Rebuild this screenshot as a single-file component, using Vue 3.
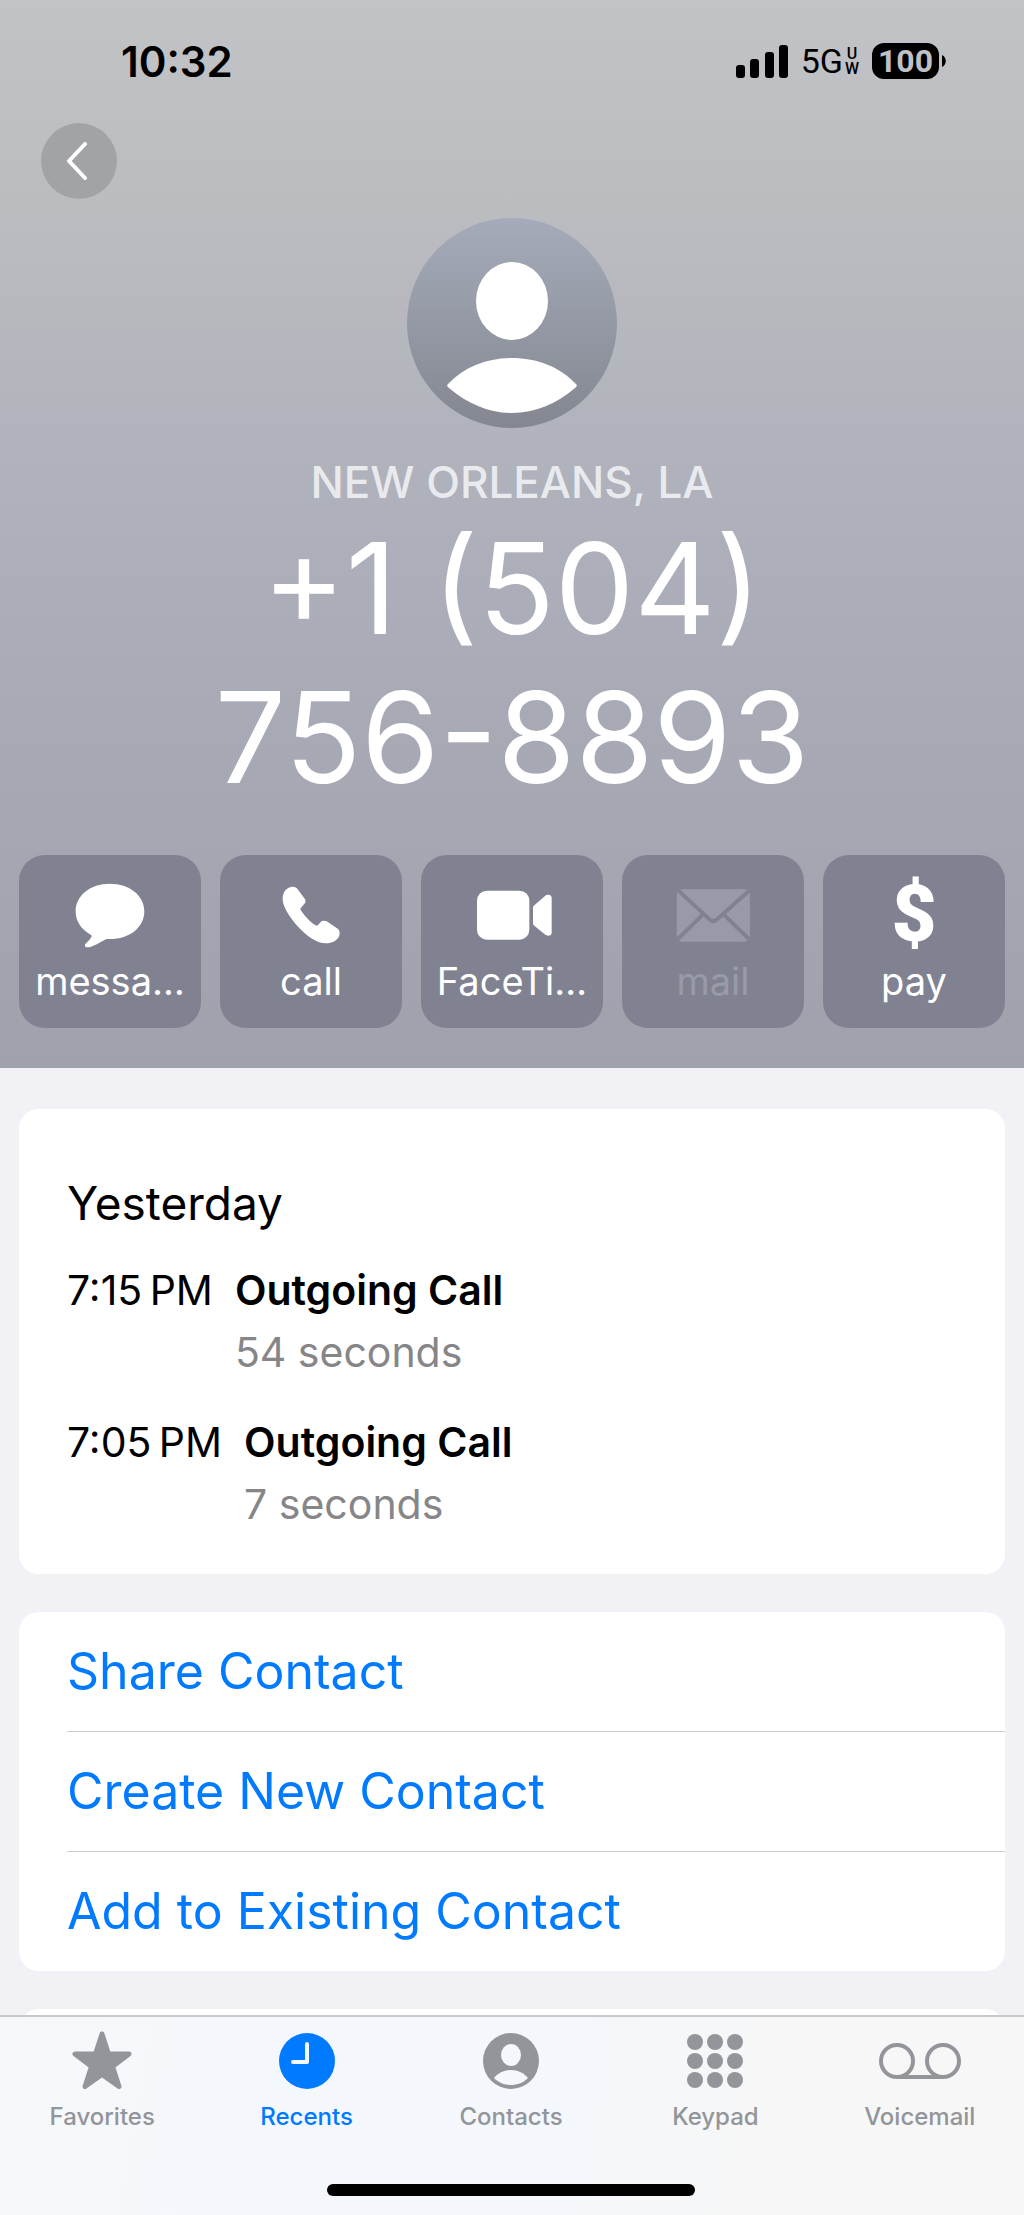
<script setup>
import { ref } from 'vue';

const actions = [
  { id: 'message', label: 'messa…' },
  { id: 'call', label: 'call' },
  { id: 'video', label: 'FaceTi…' },
  { id: 'mail', label: 'mail', disabled: true },
  { id: 'pay', label: 'pay' }
];

const calls = [
  { time: '7:15\u202fPM', type: 'Outgoing Call', duration: '54 seconds' },
  { time: '7:05\u202fPM', type: 'Outgoing Call', duration: '7 seconds' }
];

const options = ['Share Contact', 'Create New Contact', 'Add to Existing Contact'];

const tabs = ['Favorites', 'Recents', 'Contacts', 'Keypad', 'Voicemail'];
const activeTab = ref('Recents');
</script>

<template>
  <div class="phone">
    <header class="hero">
      <div class="status">
        <span class="clock">10:32</span>
        <div class="indicators">
          <svg class="signal" viewBox="0 0 52 33" width="52" height="33">
            <rect x="0" y="20" width="9" height="13" rx="3" />
            <rect x="14" y="14" width="9" height="19" rx="3" />
            <rect x="29" y="7" width="9" height="26" rx="3" />
            <rect x="43" y="0" width="9" height="33" rx="3" />
          </svg>
          <div class="network">
            <span>5G</span>
            <span class="network-sub"><span>U</span><span>W</span></span>
          </div>
          <div class="battery">
            <span class="battery-level">100</span>
            <svg viewBox="0 0 4 12" width="4" height="12"><path d="M0 0C5 2 5 10 0 12Z" /></svg>
          </div>
        </div>
      </div>

      <button class="back" type="button" aria-label="Back">
        <svg viewBox="0 0 22 38" width="22" height="38">
          <path d="M19 2 3 19 19 36" fill="none" stroke="currentColor" stroke-width="4" stroke-linecap="round" stroke-linejoin="round" />
        </svg>
      </button>

      <div class="contact">
        <svg class="avatar" viewBox="0 0 210 210" width="210" height="210">
          <defs>
            <linearGradient id="avatar-fill" x1="0" y1="0" x2="0" y2="1">
              <stop offset="0" stop-color="#a5abba" />
              <stop offset="1" stop-color="#848790" />
            </linearGradient>
          </defs>
          <circle cx="105" cy="105" r="105" fill="url(#avatar-fill)" />
          <ellipse cx="105" cy="83" rx="36" ry="39" fill="#fff" />
          <path d="M41 166C57 149 80 140 105 140S153 149 169 166Q171 168 168 170C149 186 128 195 105 195S61 186 42 170Q39 168 41 166Z" fill="#fff" />
        </svg>
        <p class="location">NEW ORLEANS, LA</p>
        <h1 class="number"><span>+1 (504)</span> <span>756-8893</span></h1>
      </div>

      <div class="actions">
        <button v-for="action in actions" :key="action.id" class="action" type="button" :disabled="action.disabled">
          <span class="action-icon">
            <svg v-if="action.id === 'message'" viewBox="223 154 211 196" width="70" height="65">
              <path d="M328 156C388 156 432 192 432 239C432 287 388 323 328 323C324 323 319 322 315 324C300 331 282 345 262 348C254 349 250 342 255 337C262 330 270 322 273 315C274 312 272 311 269 309C240 292 225 268 225 239C225 192 269 156 328 156Z" />
            </svg>
            <svg v-else-if="action.id === 'call'" viewBox="844 168 174 174" width="58" height="58">
              <path d="M876 170C882 170 887 172 890 176L911 205C916 212 916 216 911 222L901 233C899 235 899 237 900 239C908 254 928 275 945 286C948 288 950 287 952 285L960 276C965 271 972 271 978 274L1009 295C1014 298 1017 303 1017 309C1017 327 998 340 976 340C950 340 918 320 884 281C858 249 846 226 846 205C846 185 860 170 876 170Z" />
            </svg>
            <svg v-else-if="action.id === 'video'" viewBox="-84 178 240 150" width="80" height="50">
              <rect x="-69" y="180" width="157" height="147" rx="30" />
              <path d="M104 223 134 197C143 189 155 192 155 202V306C155 316 143 318 134 311L103 285C100 282 99 281 99 277V232C99 228 100 226 104 223Z" />
            </svg>
            <svg v-else-if="action.id === 'mail'" viewBox="526 174 224 160" width="75" height="53">
              <rect x="527" y="175" width="221" height="158" rx="16" />
              <g class="mail-fold">
                <path d="M527 174 625 265Q637 277 649 265L748 177" />
                <path d="M605 252 524 331" />
                <path d="M670 252 751 331" />
              </g>
            </svg>
            <span v-else class="dollar">$</span>
          </span>
          <span class="action-label">{{ action.label }}</span>
        </button>
      </div>
    </header>

    <main class="content">
      <section class="card history">
        <h2>Yesterday</h2>
        <div v-for="call in calls" :key="call.time" class="call">
          <span class="call-time">{{ call.time }}</span>
          <div>
            <div class="call-type">{{ call.type }}</div>
            <div class="call-duration">{{ call.duration }}</div>
          </div>
        </div>
      </section>

      <section class="card options">
        <button v-for="option in options" :key="option" class="option" type="button">{{ option }}</button>
      </section>

      <section class="card next"></section>
    </main>

    <footer class="tabbar">
      <nav class="tabs">
        <button
          v-for="tab in tabs"
          :key="tab"
          class="tab"
          :class="{ active: activeTab === tab }"
          type="button"
          @click="activeTab = tab"
        >
          <span class="tab-icon">
            <svg v-if="tab === 'Favorites'" viewBox="0 0 62 60" width="62" height="60">
              <path d="M31 3 37.500 23H58L41.500 35.500 48 55.500 31 43.500 14 55.500 20.500 35.500 4 23H24.500Z" stroke="currentColor" stroke-width="5" stroke-linejoin="round" />
            </svg>
            <svg v-else-if="tab === 'Recents'" viewBox="0 0 56 56" width="56" height="56">
              <circle cx="28" cy="28" r="28" />
              <path d="M28 11V29H14" fill="none" stroke="#f4f7fc" stroke-width="4" stroke-linecap="round" stroke-linejoin="round" />
            </svg>
            <svg v-else-if="tab === 'Contacts'" viewBox="0 0 56 56" width="56" height="56">
              <circle cx="28" cy="28" r="28" />
              <ellipse cx="28" cy="22" rx="10" ry="11" fill="#f4f7fc" />
              <path d="M11 45C15 40 21 37 28 37S41 40 45 45C40 50 34 52 28 52S16 50 11 45Z" fill="#f4f7fc" />
            </svg>
            <svg v-else-if="tab === 'Keypad'" viewBox="0 0 56 54" width="56" height="54">
              <template v-for="row in 3" :key="row">
                <circle v-for="col in 3" :key="col" :cx="col * 20 - 12" :cy="row * 19 - 11" r="8" />
              </template>
            </svg>
            <svg v-else viewBox="0 0 82 36" width="82" height="36">
              <g fill="none" stroke="currentColor" stroke-width="4">
                <circle cx="18" cy="18" r="16" />
                <circle cx="64" cy="18" r="16" />
                <path d="M18 34H64" />
              </g>
            </svg>
          </span>
          <span>{{ tab }}</span>
        </button>
      </nav>
      <div class="home-indicator"></div>
    </footer>
  </div>
</template>

<style>
body {
  margin: 0;
  background: #f2f1f6;
}
</style>

<style scoped>
.phone {
  height: 100vh;
  display: flex;
  flex-direction: column;
  overflow: hidden;
  background: #f2f1f6;
  color: #000;
  font-family: Inter, "Liberation Sans", sans-serif;
}

button {
  margin: 0;
  padding: 0;
  border: 0;
  background: none;
  color: inherit;
  font: inherit;
  cursor: pointer;
}

svg {
  display: block;
  flex: none;
  fill: currentColor;
}

h1, h2, p {
  margin: 0;
  font-weight: 400;
}

.hero {
  flex: none;
  padding: 36px 19px 40px;
  background: linear-gradient(#c2c3c6 0%, #bbbcc0 20%, #b0b3bc 42%, #a8aab6 65%, #9fa1ad 100%);
  color: #fff;
}

/* status bar */
.status {
  height: 50px;
  padding: 0 59px 0 102px;
  display: flex;
  align-items: center;
  justify-content: space-between;
  color: #000;
}

.clock {
  font-size: 42px;
  font-weight: 600;
}

.indicators {
  display: flex;
  align-items: center;
  gap: 13px;
}

.network {
  display: flex;
  align-items: center;
  gap: 2px;
  font-size: 34px;
  font-family: Roboto, sans-serif;
}

.network-sub {
  display: flex;
  flex-direction: column;
  align-items: center;
  font-size: 16px;
  line-height: 15px;
  font-weight: 500;
}

.battery {
  display: flex;
  align-items: center;
  gap: 3px;
}

.battery-level {
  width: 67px;
  border-radius: 12px;
  background: #000;
  color: #c0c1c4;
  font-size: 32px;
  font-weight: 700;
  font-family: Roboto, sans-serif;
  line-height: 36px;
  text-align: center;
}

.back {
  width: 76px;
  height: 76px;
  margin: 37px 0 0 22px;
  padding-right: 4px;
  display: flex;
  align-items: center;
  justify-content: center;
  border-radius: 50%;
  background: #a2a3a6;
}

/* contact card */
.contact {
  margin-top: 19px;
  display: flex;
  flex-direction: column;
  align-items: center;
  text-align: center;
}

.location {
  margin-top: 28px;
  color: #e9eaed;
  font-size: 44px;
  font-weight: 500;
  line-height: 52px;
}

.number {
  margin-top: 6px;
  font-size: 126px;
  line-height: 149px;
}

.number span {
  white-space: nowrap;
}

.actions {
  margin-top: 43px;
  display: grid;
  grid-template-columns: repeat(5, minmax(0, 1fr));
  gap: 19px;
}

.action {
  padding: 22px 14px 23px;
  border-radius: 26px;
  background: #808292;
}

.action:disabled {
  color: #989aa9;
  cursor: default;
}

.action-icon {
  height: 76px;
  display: flex;
  align-items: center;
  justify-content: center;
}

.action-label {
  display: block;
  margin-top: 4px;
  white-space: nowrap;
  font-size: 38px;
  line-height: 48px;
}

.mail-fold {
  fill: none;
  stroke: #808292;
  stroke-width: 12;
}

.dollar {
  font-family: Roboto, sans-serif;
  font-size: 78px;
  font-weight: 900;
  line-height: 76px;
}

/* lists */
.content {
  flex: 1;
  min-height: 0;
  overflow: hidden;
  padding: 41px 19px 0;
}

.card {
  border-radius: 20px;
  background: #fff;
  overflow: hidden;
}

.card + .card {
  margin-top: 38px;
}

.history {
  padding: 64px 48px 39px;
}

.history h2 {
  margin-bottom: 26px;
  font-size: 46px;
  line-height: 60px;
}

.call {
  display: flex;
  gap: 22px;
  font-size: 41px;
  line-height: 62px;
}

.call + .call {
  margin-top: 28px;
}

.call-type {
  font-weight: 600;
}

.call-duration {
  color: #868688;
}

.options {
  padding-left: 48px;
}

.option {
  display: block;
  width: 100%;
  color: #007aff;
  font-size: 50px;
  line-height: 119px;
  text-align: left;
}

.option + .option {
  border-top: 1px solid #cdcdcf;
}

.next {
  height: 120px;
}

/* tab bar */
.tabbar {
  flex: none;
  padding: 14px 2px 19px 0;
  border-top: 2px solid #c7c8cb;
  background: linear-gradient(100deg, #f7f8f9 0%, #f4f7fc 25%, #f4f7fb 55%, #f7f7f7 75%);
}

.tabs {
  display: grid;
  grid-template-columns: repeat(5, 1fr);
}

.tab {
  color: #929599;
  font-size: 24px;
  font-weight: 500;
  line-height: 28px;
}

.tab.active {
  color: #007aff;
}

.tab-icon {
  height: 60px;
  margin-bottom: 12px;
  display: flex;
  align-items: center;
  justify-content: center;
}

.home-indicator {
  width: 36%;
  height: 12px;
  margin: 53px auto 0;
  border-radius: 6px;
  background: #000;
}
</style>
